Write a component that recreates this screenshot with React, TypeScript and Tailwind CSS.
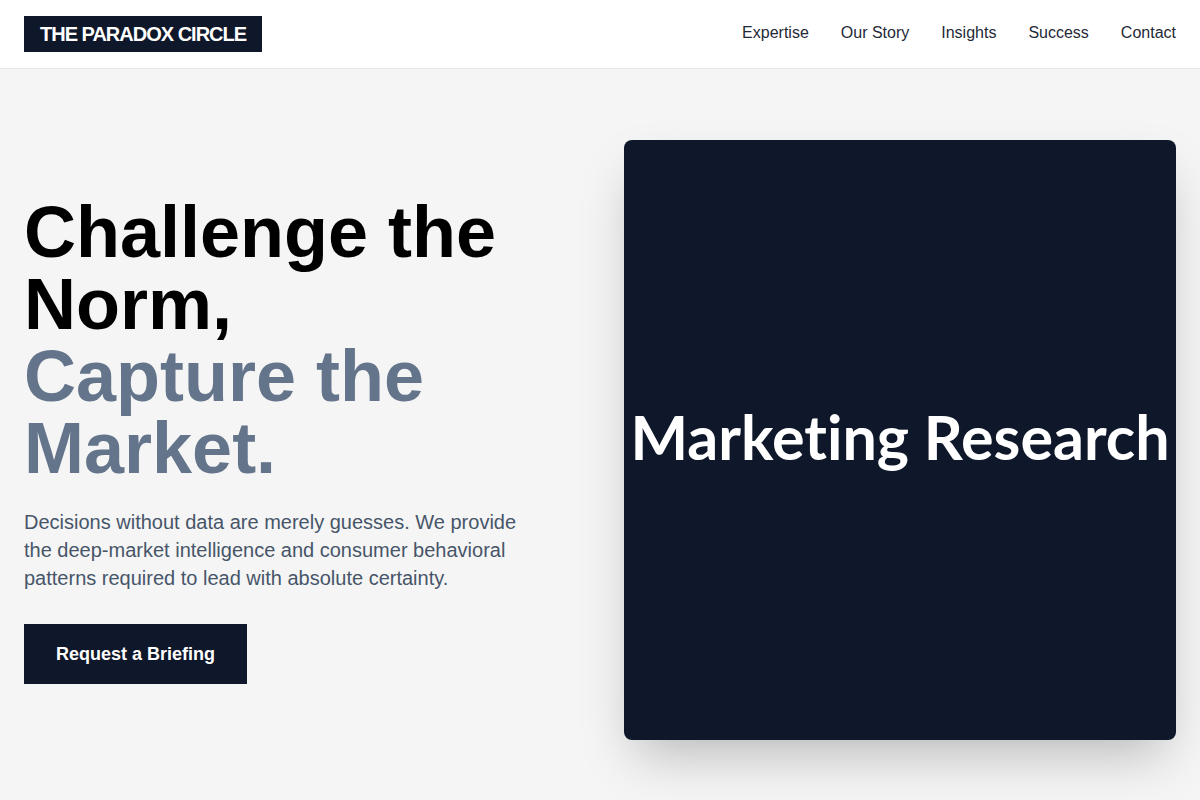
export default function App() {
  const links = ["Expertise", "Our Story", "Insights", "Success", "Contact"];
  return (
    <div className="min-h-screen bg-[#f5f5f5]" style={{ fontFamily: '"Liberation Sans", Arial, sans-serif' }}>
      <header className="flex items-center justify-between border-b border-[#e5e7eb] bg-white px-6 py-4">
        <div className="bg-[#0f172a] px-4 py-1 text-xl font-bold uppercase tracking-tighter text-white">
          The Paradox Circle
        </div>
        <nav className="mb-0.5 flex items-center gap-8 text-base text-[#1f2937]">
          {links.map((l) => (
            <a key={l} href="#" className="leading-6">
              {l}
            </a>
          ))}
        </nav>
      </header>
      <main className="px-6 pt-[71px] pb-[60px]">
        <div className="grid grid-cols-2 items-center gap-12">
          <div>
            <h1 className="text-7xl font-bold leading-none text-black">
              Challenge the Norm,
              <br />
              <span className="text-[#64748b]">Capture the Market.</span>
            </h1>
            <p className="mt-6 max-w-lg text-xl leading-7 text-[#475569]">
              Decisions without data are merely guesses. We provide the deep-market intelligence and consumer behavioral
              patterns required to lead with absolute certainty.
            </p>
            <button className="mt-8 bg-[#0f172a] px-8 py-4 text-lg font-bold leading-7 text-white">
              Request a Briefing
            </button>
          </div>
          <div className="flex h-[600px] items-center justify-center rounded-lg bg-[#0f172a] pb-2 shadow-2xl">
            <span
              className="text-[61px] font-bold leading-none text-white [font-variant-ligatures:none]"
              style={{ fontFamily: 'Lato, "Noto Sans", sans-serif' }}
            >
              Marketing Research
            </span>
          </div>
        </div>
      </main>
    </div>
  );
}
